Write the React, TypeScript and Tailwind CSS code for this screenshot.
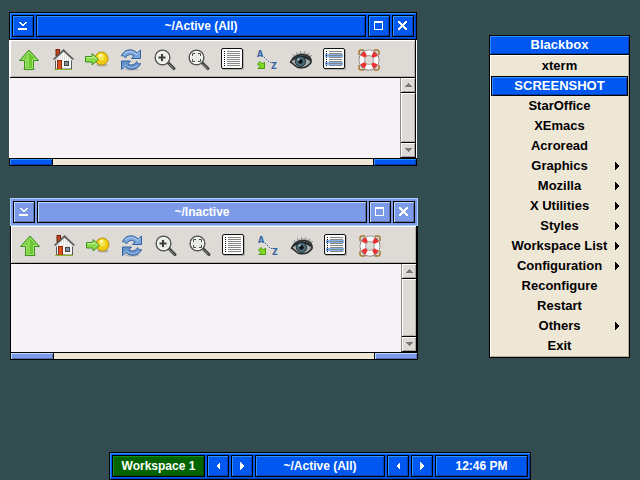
import React from "react";

type IconProps = { children: React.ReactNode };

function Icon({ children }: IconProps) {
  return (
    <svg viewBox="0 0 24 24" className="size-6" fill="none" aria-hidden="true">
      {children}
    </svg>
  );
}

function UpIcon() {
  return (
    <Icon>
      <ellipse cx="12" cy="22" rx="7" ry="1.500" fill="#000" opacity=".12" />
      <path d="M12 3 L21.500 13.500 H16.500 V22.500 H7.500 V13.500 H2.500Z" fill="#6cc832" stroke="#3f8f1c" />
      <path d="M12 4.700 L19 12.500 H15.500 V21.500 H8.500 V12.500 H5Z" stroke="#a4e474" />
      <path d="M12 6 L8 11.500 H9.500 V20 H12Z" fill="#8edc54" />
    </Icon>
  );
}

function HomeIcon() {
  return (
    <Icon>
      <rect x="5" y="2.500" width="3.500" height="6" fill="#c8401c" stroke="#6e2410" />
      <path d="M4.500 12 L12.500 4 L20.500 12 V22 H4.500Z" fill="#f6f6f4" stroke="#5a5a58" />
      <path d="M2.500 12.500 L12.500 3 L22.500 12.500" stroke="#555753" strokeWidth="1.500" />
      <path d="M4 12.500 L12.500 5 L21 12.500 V13.500 H4Z" fill="#dcdcda" />
      <path d="M8.500 9V13M10.500 7.500V13M12.500 6V13M14.500 7.500V13M16.500 9V13M18.500 11V13" stroke="#fff" />
      <rect x="6.500" y="13.500" width="4" height="9" fill="#d9501e" stroke="#8c2c0c" />
      <rect x="13.500" y="14.500" width="4" height="4" fill="#7f93a0" stroke="#444" />
      <path d="M3 22.500H21" stroke="#8ab52e" />
    </Icon>
  );
}

function GoIcon() {
  return (
    <Icon>
      <ellipse cx="17" cy="18" rx="5.500" ry="1.500" fill="#000" opacity=".2" />
      <circle cx="16.500" cy="11.500" r="6.500" fill="#efcb13" stroke="#b8940c" />
      <circle cx="16" cy="10" r="3.500" fill="#fae64c" />
      <circle cx="15.500" cy="8.500" r="1.500" fill="#fffbc4" />
      <path d="M.5 9.500 H7 V6.500 L13.500 12.500 L7 18 V15 H.5Z" fill="#8bdc4c" stroke="#3f8f1c" />
      <path d="M1.500 10.500H8V9L12 12.500" stroke="#c4f49c" />
    </Icon>
  );
}

function ReloadIcon() {
  return (
    <Icon>
      <ellipse cx="12" cy="22.500" rx="8" ry="1.200" fill="#000" opacity=".15" />
      <path d="M2.500 9 C4 4 9 2 13.500 3.200 C15.500 3.800 17 5 18 6 L21.500 3 V11.500 H12.500 L15 8.800 C12 6.500 8 7.500 6.500 11 C5.500 9 4 8.500 2.500 9Z" fill="#7ba6dc" stroke="#34619f" />
      <path d="M21.500 16.500 C20 21 15 23 10.500 22 C8.500 21.500 7 20.500 6 19.500 L2.500 22.500 V14 H11.500 L9 16.700 C12 19 16 18 17.500 14.500 C18.500 16.500 20 17 21.500 16.500Z" fill="#6592ca" stroke="#34619f" />
      <path d="M5 7 C9 3.500 14 4 17.500 7.500 L20.500 5" stroke="#b4d0f2" />
      <path d="M19 18 C15 21.500 10 21 6.500 18 L3.500 20.500" stroke="#9dc0ea" />
    </Icon>
  );
}

function Lens({ children }: IconProps) {
  return (
    <Icon>
      <path d="M15 17 L21 23" stroke="#000" strokeWidth="2" opacity=".15" />
      <path d="M15 15.500 L21 21.500" stroke="#454843" strokeWidth="3" strokeLinecap="round" />
      <path d="M16 17 L20.500 21.500" stroke="#81847e" />
      <circle cx="9.500" cy="10.500" r="7.300" fill="#e9ebe8" stroke="#555753" strokeWidth="1.500" />
      <circle cx="9.500" cy="10.500" r="6" stroke="#fff" />
      {children}
    </Icon>
  );
}

function ZoomInIcon() {
  return (
    <Lens>
      <path d="M9 7V14M5.500 10.500H12.500" stroke="#3c3e3a" strokeWidth="2" />
    </Lens>
  );
}

function ZoomFitIcon() {
  return (
    <Lens>
      <path d="M5.500 9V6.500H8M11 6.500H13.500V9M13.500 12V14.500H11M8 14.500H5.500V12" stroke="#4a4c48" />
    </Lens>
  );
}

function ListIcon({ marked = false }: { marked?: boolean }) {
  return (
    <Icon>
      <rect x="1" y="2" width="22" height="21" rx="1.500" fill="#000" opacity=".2" />
      <rect x=".5" y="1.500" width="21" height="20" rx="1.500" fill="#fcfcfc" stroke="#111" />
      {marked && <path d="M2 8.500H20M2 16.500H20" stroke="#86b4ee" strokeWidth="3" />}
      <path d="M6 4.500H19M6 6.500H19M6 8.500H19M6 10.500H19M6 12.500H19M6 14.500H19M6 16.500H19M6 18.500H19" stroke="#858785" />
      <path d="M3.500 4V20" stroke="#111" strokeDasharray="1 1" />
    </Icon>
  );
}

function SortIcon() {
  return (
    <Icon>
      <text x="2" y="10" fontSize="8" fontWeight="700" fontFamily="DejaVu Sans, sans-serif" fill="#3465a4">A</text>
      <text x="16" y="22" fontSize="8" fontWeight="700" fontFamily="DejaVu Sans, sans-serif" fill="#3465a4">Z</text>
      <g fill="#3465a4">
        <rect x="9" y="10" width="1" height="1" />
        <rect x="11" y="12" width="1" height="1" />
        <rect x="13" y="14" width="1" height="1" />
        <rect x="15" y="15" width="1" height="1" />
      </g>
      <path d="M2.500 17 L5 14.500 L7.500 17 L9.500 15 V21.500 H3 L5 19.500Z" fill="#7fdc22" stroke="#4a9a0c" />
    </Icon>
  );
}

function EyeIcon() {
  return (
    <Icon>
      <path d="M3 10 Q12 2 22 8 L20 12 L4 14Z" fill="#777" opacity=".4" />
      <path d="M5 9L4 7M8 7.500L7.500 5M11.500 6.500V4M15 6.500L16 4M18.500 8L20 5.500M21 10L23 8" stroke="#777" strokeWidth=".7" />
      <path d="M1.500 15 C5 8 12 6 18 8.500 C21 10 22.500 13 22 15.500 C19 20 14 21.500 9 20.500 C6 19.500 4 16.500 1.500 15Z" fill="#a5aaaa" stroke="#262a2a" strokeWidth="1.500" />
      <path d="M3 14 C6 8.500 12 7 18 9.500 C21 11 22 13 22 15 C17 10 10 9.500 3 14Z" fill="#252929" />
      <circle cx="11.500" cy="14.500" r="5" fill="#4b6c78" stroke="#1f2c30" />
      <circle cx="11.500" cy="14.500" r="2.200" fill="#0c1214" />
      <circle cx="9.500" cy="12.500" r="1.200" fill="#9fbcc6" />
    </Icon>
  );
}

function HelpIcon() {
  return (
    <Icon>
      <ellipse cx="12" cy="22.500" rx="8" ry="1.200" fill="#000" opacity=".15" />
      <path d="M2 8V5Q2 3 4 3H7M17 3H20Q22 3 22 5V8M22 18V21Q22 23 20 23H17M7 23H4Q2 23 2 21V18" stroke="#a57a36" strokeWidth="1.500" />
      <circle cx="12" cy="13" r="7.200" stroke="#85857f" strokeWidth="6.600" />
      <circle cx="12" cy="13" r="7.200" stroke="#f8f8f8" strokeWidth="5" />
      <circle cx="12" cy="13" r="7.200" stroke="#ea3232" strokeWidth="5" strokeDasharray="4.400 6.910" strokeDashoffset="-3.455" />
    </Icon>
  );
}

const tools = [
  { name: "Up", icon: <UpIcon /> },
  { name: "Home", icon: <HomeIcon /> },
  { name: "Go to", icon: <GoIcon /> },
  { name: "Reload", icon: <ReloadIcon /> },
  { name: "Zoom in", icon: <ZoomInIcon /> },
  { name: "Zoom to fit", icon: <ZoomFitIcon /> },
  { name: "List", icon: <ListIcon /> },
  { name: "Sort", icon: <SortIcon /> },
  { name: "Show hidden", icon: <EyeIcon /> },
  { name: "Select", icon: <ListIcon marked /> },
  { name: "Help", icon: <HelpIcon /> },
];

const activeBevel =
  "border border-black bg-[#0058f0] text-white shadow-[inset_1px_1px_0_#2c92ff,inset_-1px_-1px_0_#0040b4]";
const inactiveBevel =
  "border border-black bg-[#7c9ae8] text-white shadow-[inset_1px_1px_0_#b4dcff,inset_-1px_-1px_0_#5c74b0]";

function Glyph({ d, label }: { d: string; label: string }) {
  return (
    <svg viewBox="0 0 10 10" className="size-[10px]" shapeRendering="crispEdges" role="img" aria-label={label}>
      <path d={d} fill="#fff" />
    </svg>
  );
}

const minimize = "M1 1h2v1h1v1h2v-1h1v-1h2v1h-1v1h-1v1h-1v1h-2v-1h-1v-1h-1v-1h-1zM0 7h9v2h-9z";
const maximize = "M0 0h9v9h-9zM1 2v6h7v-6z";
const close = "M0 0h2v1h1v1h1v1h1v-1h1v-1h1v-1h2v2h-1v1h-1v1h-1v1h1v1h1v1h1v2h-2v-1h-1v-1h-1v-1h-1v1h-1v1h-1v1h-2v-2h1v-1h1v-1h1v-1h-1v-1h-1v-1h-1z";

function ScrollButton({ down = false }: { down?: boolean }) {
  return (
    <button
      aria-label={down ? "Scroll down" : "Scroll up"}
      className="flex h-[14px] items-center justify-center bg-[#dedbd6] shadow-[inset_1px_1px_0_#fff,inset_-1px_-1px_0_#aaa59c]"
    >
      <svg viewBox="0 0 8 4" className="h-1 w-2" shapeRendering="crispEdges">
        <path d={down ? "M0 0h8L4 4z" : "M4 0L8 4H0z"} fill="#7b7974" />
      </svg>
    </button>
  );
}

type WindowProps = { title: string; active?: boolean; place: string; body: string };

function Window({ title, active = false, place, body }: WindowProps) {
  const bevel = active ? activeBevel : inactiveBevel;
  const button = `${bevel} flex size-[22px] shrink-0 items-center justify-center`;
  return (
    <section className={`absolute w-[408px] ${place}`} aria-label={title}>
      <header
        className={`flex h-7 items-center gap-[2px] border px-[2px] ${
          active
            ? "border-black bg-[#0058f0] shadow-[inset_1px_1px_0_#2c92ff,inset_-1px_-1px_0_#0040b4]"
            : "border-[#a8d0f8] bg-[#7c9ae8]"
        }`}
      >
        <button className={button}><Glyph d={minimize} label="Minimize" /></button>
        <h2 className={`${bevel} flex h-[22px] grow items-center justify-center`}>{title}</h2>
        <button className={button}><Glyph d={maximize} label="Maximize" /></button>
        <button className={button}><Glyph d={close} label="Close" /></button>
      </header>
      <div className={`border-x ${active ? "border-white" : "border-black"}`}>
        <div className="flex h-[38px] items-center border-r border-b border-black bg-[#dedbd6] pl-[2px] shadow-[inset_1px_1px_0_#fff,inset_-1px_-1px_0_#b5b1a9]">
          {tools.map((tool) => (
            <button key={tool.name} aria-label={tool.name} className="flex size-[34px] items-center justify-center">
              {tool.icon}
            </button>
          ))}
        </div>
        <div className={`flex justify-end bg-[#f7f3f7] ${body}`}>
          <div className="flex w-4 flex-col gap-px border-r border-b border-l border-r-black border-b-black border-l-[#8c8a84] bg-black">
            <ScrollButton />
            <div className="grow bg-[#dedbd6] shadow-[inset_1px_1px_0_#fff,inset_-1px_-1px_0_#b5b1a9]" />
            <ScrollButton down />
          </div>
        </div>
      </div>
      <footer className="flex h-2 justify-between bg-[#efe7d6] shadow-[inset_0_1px_0_#000,inset_0_-1px_0_#000]">
        <div className={`${bevel} w-11`} />
        <div className={`${bevel} w-11`} />
      </footer>
    </section>
  );
}

const menu = [
  { label: "xterm" },
  { label: "SCREENSHOT", selected: true },
  { label: "StarOffice" },
  { label: "XEmacs" },
  { label: "Acroread" },
  { label: "Graphics", sub: true },
  { label: "Mozilla", sub: true },
  { label: "X Utilities", sub: true },
  { label: "Styles", sub: true },
  { label: "Workspace List", sub: true },
  { label: "Configuration", sub: true },
  { label: "Reconfigure" },
  { label: "Restart" },
  { label: "Others", sub: true },
  { label: "Exit" },
];

function RootMenu() {
  return (
    <nav className="absolute top-[35px] right-[10px] w-[141px] border border-black bg-[#efe7d6] text-[13px]" aria-label="Blackbox">
      <h2 className="flex h-[19px] items-center justify-center border-b border-black bg-[#0058f0] text-white shadow-[inset_1px_1px_0_#2c92ff,inset_-1px_-1px_0_#0040b4]">
        Blackbox
      </h2>
      <ul className="border border-t-white border-r-[#b4ae9f] border-b-[#b4ae9f] border-l-white">
        {menu.map((item) => (
          <li key={item.label}>
            <button
              className={`relative flex h-5 w-full items-center justify-center ${item.selected ? activeBevel : "text-black"}`}
            >
              {item.label}
              {item.sub && (
                <svg viewBox="0 0 4 8" className="absolute right-[9px] h-2 w-1" shapeRendering="crispEdges" aria-hidden="true">
                  <path d="M0 0L4 4L0 8z" fill="#000" />
                </svg>
              )}
            </button>
          </li>
        ))}
      </ul>
    </nav>
  );
}

function Arrow({ left = false, label }: { left?: boolean; label: string }) {
  return (
    <button aria-label={label} className={`${activeBevel} flex h-[22px] w-[22px] shrink-0 items-center justify-center`}>
      <svg viewBox="0 0 4 8" className="h-2 w-1" shapeRendering="crispEdges">
        <path d={left ? "M4 0L0 4L4 8z" : "M0 0L4 4L0 8z"} fill="#fff" />
      </svg>
    </button>
  );
}

function Toolbar() {
  return (
    <footer className="flex h-7 w-[422px] items-center gap-[2px] border border-black bg-[#0058f0] px-[2px] text-white shadow-[inset_1px_1px_0_#2c92ff,inset_-1px_-1px_0_#0040b4]">
      <div className="flex h-[22px] w-[93px] items-center justify-center border border-black bg-[#006400] shadow-[inset_1px_1px_0_#109010,inset_-1px_-1px_0_#004800]">
        Workspace 1
      </div>
      <Arrow left label="Previous workspace" />
      <Arrow label="Next workspace" />
      <div className={`${activeBevel} flex h-[22px] grow items-center justify-center`}>~/Active (All)</div>
      <Arrow left label="Previous window" />
      <Arrow label="Next window" />
      <time className={`${activeBevel} flex h-[22px] w-[93px] items-center justify-center`}>12:46 PM</time>
    </footer>
  );
}

export default function App() {
  return (
    <main className="relative flex h-screen items-end justify-center overflow-hidden bg-[#324c50] font-['Liberation_Sans',Arial,sans-serif] text-[12px] leading-4 font-bold">
      <Window title="~/Active (All)" active place="top-3 left-[9px]" body="h-20" />
      <Window title="~/Inactive" place="top-[198px] left-[10px]" body="h-[88px]" />
      <RootMenu />
      <Toolbar />
    </main>
  );
}
